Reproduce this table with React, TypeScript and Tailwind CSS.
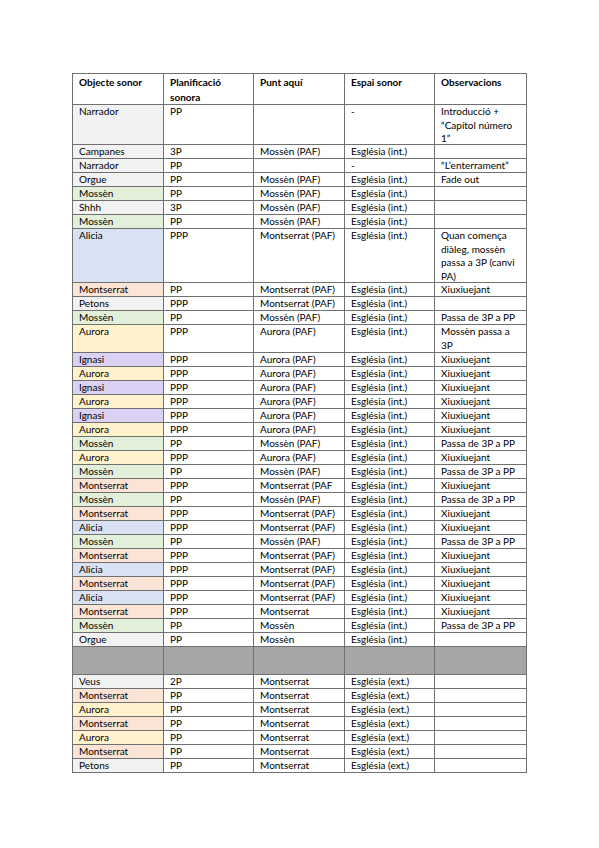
import React from 'react';

type Tone = 'gray' | 'green' | 'blue' | 'peach' | 'yellow' | 'purple' | 'dark';

interface Row {
  cells: [string, string, string, string, string];
  tone: Tone;
  h?: string;
}

const toneClass: Record<Tone, string> = {
  gray: 'bg-[#f2f2f2]',
  green: 'bg-[#e2efd9]',
  blue: 'bg-[#d9e2f3]',
  peach: 'bg-[#fbe4d5]',
  yellow: 'bg-[#fff2cc]',
  purple: 'bg-[#dad1f4]',
  dark: 'bg-[#a6a6a6]',
};

const INT = 'Església (int.)';
const EXT = 'Església (ext.)';
const MP = 'Mossèn (PAF)';
const MO = 'Montserrat (PAF)';
const AU = 'Aurora (PAF)';
const XX = 'Xiuxiuejant';
const PS = 'Passa de 3P a PP';

const rows: Row[] = [
  { cells: ['Narrador', 'PP', '', '-', 'Introducció +\n“Capítol número\n1”'], tone: 'gray', h: 'h-[40px]' },
  { cells: ['Campanes', '3P', MP, INT, ''], tone: 'gray' },
  { cells: ['Narrador', 'PP', '', '-', '“L’enterrament”'], tone: 'gray' },
  { cells: ['Orgue', 'PP', MP, INT, 'Fade out'], tone: 'gray' },
  { cells: ['Mossèn', 'PP', MP, INT, ''], tone: 'green' },
  { cells: ['Shhh', '3P', MP, INT, ''], tone: 'gray' },
  { cells: ['Mossèn', 'PP', MP, INT, ''], tone: 'green' },
  { cells: ['Alicia', 'PPP', MO, INT, 'Quan comença\ndiàleg, mossèn\npassa a 3P (canvi\nPA)'], tone: 'blue', h: 'h-[54px]' },
  { cells: ['Montserrat', 'PP', MO, INT, XX], tone: 'peach' },
  { cells: ['Petons', 'PPP', MO, INT, ''], tone: 'gray' },
  { cells: ['Mossèn', 'PP', MP, INT, PS], tone: 'green' },
  { cells: ['Aurora', 'PPP', AU, INT, 'Mossèn passa a\n3P'], tone: 'yellow', h: 'h-[28px]' },
  { cells: ['Ignasi', 'PPP', AU, INT, XX], tone: 'purple' },
  { cells: ['Aurora', 'PPP', AU, INT, XX], tone: 'yellow' },
  { cells: ['Ignasi', 'PPP', AU, INT, XX], tone: 'purple' },
  { cells: ['Aurora', 'PPP', AU, INT, XX], tone: 'yellow' },
  { cells: ['Ignasi', 'PPP', AU, INT, XX], tone: 'purple' },
  { cells: ['Aurora', 'PPP', AU, INT, XX], tone: 'yellow' },
  { cells: ['Mossèn', 'PP', MP, INT, PS], tone: 'green' },
  { cells: ['Aurora', 'PPP', AU, INT, XX], tone: 'yellow' },
  { cells: ['Mossèn', 'PP', MP, INT, PS], tone: 'green' },
  { cells: ['Montserrat', 'PPP', 'Montserrat (PAF', INT, XX], tone: 'peach' },
  { cells: ['Mossèn', 'PP', MP, INT, PS], tone: 'green' },
  { cells: ['Montserrat', 'PPP', MO, INT, XX], tone: 'peach' },
  { cells: ['Alicia', 'PPP', MO, INT, XX], tone: 'blue' },
  { cells: ['Mossèn', 'PP', MP, INT, PS], tone: 'green' },
  { cells: ['Montserrat', 'PPP', MO, INT, XX], tone: 'peach' },
  { cells: ['Alicia', 'PPP', MO, INT, XX], tone: 'blue' },
  { cells: ['Montserrat', 'PPP', MO, INT, XX], tone: 'peach' },
  { cells: ['Alicia', 'PPP', MO, INT, XX], tone: 'blue' },
  { cells: ['Montserrat', 'PPP', 'Montserrat', INT, XX], tone: 'peach' },
  { cells: ['Mossèn', 'PP', 'Mossèn', INT, PS], tone: 'green' },
  { cells: ['Orgue', 'PP', 'Mossèn', INT, ''], tone: 'gray' },
  { cells: ['', '', '', '', ''], tone: 'dark', h: 'h-[28px]' },
  { cells: ['Veus', '2P', 'Montserrat', EXT, ''], tone: 'gray' },
  { cells: ['Montserrat', 'PP', 'Montserrat', EXT, ''], tone: 'peach' },
  { cells: ['Aurora', 'PP', 'Montserrat', EXT, ''], tone: 'yellow' },
  { cells: ['Montserrat', 'PP', 'Montserrat', EXT, ''], tone: 'peach' },
  { cells: ['Aurora', 'PP', 'Montserrat', EXT, ''], tone: 'yellow' },
  { cells: ['Montserrat', 'PP', 'Montserrat', EXT, ''], tone: 'peach' },
  { cells: ['Petons', 'PP', 'Montserrat', EXT, ''], tone: 'gray' },
];

const widths = ['w-[91px]', 'w-[90px]', 'w-[91px]', 'w-[90px]', 'flex-1'];

export default function App() {
  return (
    <div className="min-h-screen bg-white pt-[73px] pl-[72px] text-black" style={{ fontFamily: 'Lato, "Open Sans", sans-serif' }}>
      <div className="w-[455px] border-t border-l border-r border-[#707070] text-[10px]">
        {/* header */}
        <div className="flex h-[31px] border-b border-[#707070] font-bold leading-[15px]">
          <div className={`${widths[0]} border-r border-[#707070] pl-[6px] pt-[1px]`}>Objecte sonor</div>
          <div className={`${widths[1]} border-r border-[#707070] pl-[6px] pt-[1px]`}>Planificació<br />sonora</div>
          <div className={`${widths[2]} border-r border-[#707070] pl-[6px] pt-[1px]`}>Punt aquí</div>
          <div className={`${widths[3]} border-r border-[#707070] pl-[6px] pt-[1px]`}>Espai sonor</div>
          <div className={`${widths[4]} pl-[6px] pt-[1px]`}>Observacions</div>
        </div>
        {rows.map((r, i) => (
          <div key={i} className={`flex border-b border-[#707070] ${r.h ?? 'h-[14px]'} ${r.tone === 'dark' ? 'bg-[#a6a6a6]' : ''}`}>
            {r.cells.map((c, j) => (
              <div
                key={j}
                className={`${widths[j]} ${j < 4 ? 'border-r border-[#707070]' : ''} ${j === 0 ? toneClass[r.tone] : ''} pl-[6px] whitespace-pre leading-[13.5px] overflow-hidden`}
              >
                {c}
              </div>
            ))}
          </div>
        ))}
      </div>
    </div>
  );
}
